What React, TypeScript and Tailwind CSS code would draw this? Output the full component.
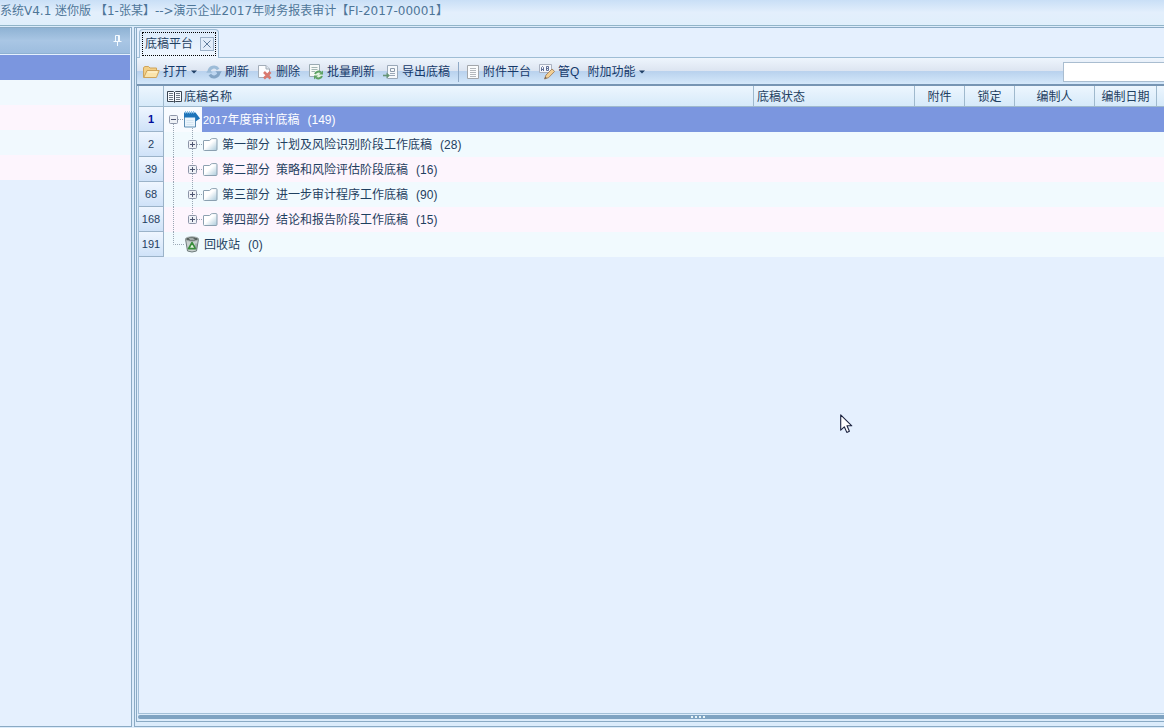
import React from 'react';

const PinIcon = () => (
  <svg width="9" height="11" viewBox="0 0 9 11" fill="none" stroke="#f4faff" aria-hidden="true">
    <path d="M2.5 0.5H6.5M2.5 0.5V6M5.5 0.5V6M6.5 0.5V6M0.5 6.5H8.5M4.5 7V11" />
  </svg>
);

const OpenFolderIcon = () => (
  <svg width="17" height="16" viewBox="0 0 17 16" aria-hidden="true">
    <path d="M0.5 13.5V3.5L2 2.5H5.5L7 4H13.5V7" fill="#f2cf86" stroke="#cfa45b" />
    <path d="M0.8 13.5L4 6.5H16.2L13.4 13.5Z" fill="#fae4ab" stroke="#cfa45b" strokeLinejoin="round" />
    <path d="M4.8 8H14" stroke="#fff6d9" />
  </svg>
);

const RefreshIcon = () => (
  <svg width="16" height="16" viewBox="0 0 16 16" fill="none" aria-hidden="true">
    <path d="M3 8A5 5 0 0 1 12.2 5.4" stroke="#9dbcd8" strokeWidth="3" />
    <path d="M13 8A5 5 0 0 1 3.8 10.6" stroke="#84a5c6" strokeWidth="3" />
    <path d="M9.4 7.2H15.8L13 11Z" fill="#84a5c6" />
    <path d="M6.6 8.8H0.2L3 5Z" fill="#9dbcd8" />
  </svg>
);

const DeleteIcon = () => (
  <svg width="16" height="16" viewBox="0 0 16 16" aria-hidden="true">
    <path d="M1.5 1.5H9L12.5 5V13.5H1.5Z" fill="#fcfdff" stroke="#a3adb9" />
    <path d="M9 1.5V5H12.5" fill="#e1e7ee" stroke="#a3adb9" />
    <path d="M7 8L13.5 14.5M13.5 8L7 14.5" stroke="#d9796f" strokeWidth="2.6" />
  </svg>
);

const BatchIcon = () => (
  <svg width="16" height="16" viewBox="0 0 16 16" fill="none" aria-hidden="true">
    <path d="M1.5 0.5H11.5V12.5H1.5Z" fill="#f7faf8" stroke="#9aaab2" />
    <path d="M3.5 3.5H9.5M3.5 5.5H9.5M3.5 7.5H7" stroke="#a4b6b4" />
    <circle cx="10.5" cy="11" r="3.6" fill="#e2f1df" />
    <path d="M7 10A3.7 3.7 0 0 1 13 8.6M14 12A3.7 3.7 0 0 1 8 13.4" stroke="#5da264" strokeWidth="2" />
    <path d="M11 10.5H15V6.5ZM10 11.5H6V15.5Z" fill="#5da264" />
  </svg>
);

const ExportIcon = () => (
  <svg width="16" height="16" viewBox="0 0 16 16" fill="none" aria-hidden="true">
    <path d="M4.5 1.5H14.5V14.5H4.5Z" fill="#f6f9fc" stroke="#9aa8b8" />
    <path d="M7.5 4.5H11.5V7.5H7.5Z" stroke="#8c9aab" />
    <path d="M7 9.5H12M7 11.5H12" stroke="#9aa8b8" />
    <path d="M0 11.5H4" stroke="#679577" strokeWidth="1.6" />
    <path d="M3.5 8.5L7 11.5L3.5 14.5Z" fill="#679577" />
  </svg>
);

const PageIcon = () => (
  <svg width="14" height="16" viewBox="0 0 14 16" fill="none" aria-hidden="true">
    <path d="M1.5 1.5H12.5V14.5H1.5Z" fill="#fbfcfd" stroke="#a2a6ab" />
    <path d="M4 4.5H10M4 6.5H10M4 8.5H10M4 10.5H10M4 12.5H10" stroke="#b4b8bd" />
  </svg>
);

const LabelPenIcon = () => (
  <svg width="16" height="16" viewBox="0 0 16 16" fill="none" aria-hidden="true">
    <path d="M0.5 0.5H12.5V8.5H0.5Z" fill="#f3f5fa" stroke="#a9b1c0" />
    <path d="M2.5 7V3.5L3.5 2.5L4.5 3.5V7M2.5 5.5H4.5M7.5 2.5V6.5H9.5V4.5H7.5M7.5 2.5H9.5V4.5" stroke="#5e6f96" />
    <path d="M5.5 15L7 11L13 5L15.6 7.4L9.6 13.6Z" fill="#f2cf94" stroke="#a88a68" />
    <path d="M5.5 15L6.3 12.8L7.9 14Z" fill="#6d6258" />
  </svg>
);

const Caret = () => (
  <svg width="8" height="4" viewBox="0 0 8 4" aria-hidden="true">
    <path d="M1 0.5H7L4 3.5Z" fill="#1f3f66" />
  </svg>
);

const BookIcon = () => (
  <svg width="15" height="13" viewBox="0 0 15 13" fill="none" aria-hidden="true">
    <path
      d="M0.5 1.5H6.5L7.5 2.5L8.5 1.5H14.5V11.5H8.5L7.5 12.5L6.5 11.5H0.5Z"
      fill="#f8fbff"
      stroke="#3b4652"
    />
    <path d="M7.5 2V12" stroke="#3b4652" />
    <path d="M2 3.5H6M2 5.5H6M2 7.5H6M2 9.5H6M9 3.5H13M9 5.5H13M9 7.5H13M9 9.5H13" stroke="#6d7883" />
  </svg>
);

const NotebookIcon = () => (
  <svg width="17" height="17" viewBox="0 0 17 17" aria-hidden="true">
    <path d="M1.5 3H12.5V16H1.5Z" fill="#eaf4fc" stroke="#5c8db3" />
    <path d="M1 1.5H12.5L17 7.5L12.5 10.5V6.5H1Z" fill="#1d74ba" />
    <path d="M2.5 0V2.5M4.5 0V2.5M6.5 0V2.5M8.5 0V2.5M10.5 0V2.5" stroke="#8cc0e6" />
    <path d="M3.5 9.5H10.5M3.5 11.5H10.5M3.5 13.5H10.5" stroke="#d5e6f2" />
  </svg>
);

const FolderIcon = () => (
  <svg width="16" height="14" viewBox="0 0 16 14" aria-hidden="true">
    <defs>
      <linearGradient id="folder" x1="0" y1="0" x2="1" y2="1">
        <stop offset="0.45" stopColor="#ffffff" />
        <stop offset="1" stopColor="#a9c9da" />
      </linearGradient>
    </defs>
    <path
      d="M1.5 11.5V3Q1.5 2.5 2 2.5H7.5L9.2 1Q9.6 0.6 10.2 0.6H14Q15 0.6 15 1.6V11.5Q15 12.5 14 12.5H2.5Q1.5 12.5 1.5 11.5Z"
      fill="url(#folder)"
      stroke="#8ba0b0"
    />
  </svg>
);

const RecycleIcon = () => (
  <svg width="16" height="17" viewBox="0 0 16 17" aria-hidden="true">
    <path d="M1.5 3L3.5 15Q8 17 12.5 15L14.5 3Z" fill="#c9d1d0" stroke="#6f7c7c" />
    <ellipse cx="8" cy="3" rx="6.5" ry="2.2" fill="#59635f" stroke="#a8b2b0" />
    <path d="M4.7 2.5H9L11 3.6H6Z" fill="#e9efee" />
    <path d="M8 6.6L11.6 12.6H4.6Z" fill="#e3f3dc" stroke="#388c3a" strokeWidth="1.8" strokeLinejoin="round" />
    <path d="M12 7.5V12.5" stroke="#79898a" />
  </svg>
);

function Toggle({ open }: { open: boolean }) {
  return (
    <button type="button" aria-label={open ? '折叠' : '展开'} className="h-[9px] w-[9px] shrink-0">
      <svg width="9" height="9" viewBox="0 0 9 9" className="block">
        <rect x="0.5" y="0.5" width="8" height="8" rx="1" fill="#eef1f6" stroke="#8d95a8" />
        <path d={open ? 'M2 4.5H7' : 'M2 4.5H7M4.5 2V7'} stroke="#4d5470" />
      </svg>
    </button>
  );
}

/* Dotted connector segment drawn in one 25px tree row */
function Guide({ d, width }: { d: string; width: 5 | 20 | 24 }) {
  return (
    <svg width={width} height="25" viewBox={`0 0 ${width} 25`} className="shrink-0 overflow-visible">
      <path d={d} stroke="#9aa7b4" strokeDasharray="1 1" fill="none" />
    </svg>
  );
}

type Tool = { label: string; icon?: React.ReactNode; menu?: boolean };

const tools: Tool[] = [
  { label: '打开', icon: <OpenFolderIcon />, menu: true },
  { label: '刷新', icon: <RefreshIcon /> },
  { label: '删除', icon: <DeleteIcon /> },
  { label: '批量刷新', icon: <BatchIcon /> },
  { label: '导出底稿', icon: <ExportIcon /> },
];

const extraTools: Tool[] = [
  { label: '附件平台', icon: <PageIcon /> },
  { label: '管Q', icon: <LabelPenIcon /> },
  { label: '附加功能', menu: true },
];

function ToolButton({ label, icon, menu }: Tool) {
  return (
    <button type="button" className="flex shrink-0 items-center gap-[3px] whitespace-nowrap">
      {icon}
      <span>{label}</span>
      {menu && <Caret />}
    </button>
  );
}

const sections = [
  { no: 2, part: '第一部分', name: '计划及风险识别阶段工作底稿', count: 28 },
  { no: 39, part: '第二部分', name: '策略和风险评估阶段底稿', count: 16 },
  { no: 68, part: '第三部分', name: '进一步审计程序工作底稿', count: 90 },
  { no: 168, part: '第四部分', name: '结论和报告阶段工作底稿', count: 15 },
];

const headCell = 'h-[21px] border-r border-b border-[#9fb9cd] p-0 pt-px font-normal';
const numberCell =
  'h-[25px] border-r border-b border-[#9bb3c9] bg-linear-to-b from-[#eff6ff] to-[#cfe2f8] p-0 text-center text-[11px]';

export default function App() {
  return (
    <div className="flex h-screen flex-col overflow-hidden bg-[#dcecfb] font-['Liberation_Sans','Noto_Sans_CJK_SC',sans-serif] text-xs leading-4 text-[#1f4060]">
      <header className="flex h-[26px] shrink-0 items-start border-b border-[#91b5c8] bg-linear-to-b from-[#c9dff6] via-[#e3effc] to-[#e0effb] pt-[3px] font-['DejaVu_Sans','Noto_Sans_CJK_SC',sans-serif] text-[#4e7698]">
        <h1 className="whitespace-pre">系统V4.1 迷你版 【1-张某】--&gt;演示企业2017年财务报表审计【FI-2017-00001】</h1>
      </header>

      <div className="flex min-h-0 flex-1 gap-[2px] pt-px pb-px">
        <aside className="w-[132px] shrink-0 border-t border-r border-b border-[#8aaac4] bg-[#e5f0fe] pr-px">
          <div className="flex h-[26px] items-center justify-end border-b border-[#8fb1d2] bg-linear-to-b from-[#8fb3d4] via-[#a9c6e4] to-[#9dbddf] pr-2">
            <button type="button" aria-label="固定">
              <PinIcon />
            </button>
          </div>
          <div className="mt-px h-[25px] bg-[#7b96df]" />
          <div className="h-[25px] bg-[#f1f9fe]" />
          <div className="h-[25px] bg-[#fdf5fd]" />
          <div className="h-[25px] bg-[#f1f9fe]" />
          <div className="h-[25px] bg-[#fdf5fd]" />
        </aside>

        <main className="min-w-0 flex-1 border-t border-b border-l border-[#8aaac4] pb-1 pl-px">
          <div className="flex h-full flex-col border-b border-l border-[#8aaac4] pb-[2px]">
            <div className="flex h-[30px] shrink-0 items-end border-b border-[#9fbdd5] bg-[#e5f0fe] pl-[2px]">
              <div
                role="tab"
                aria-selected="true"
                className="-mb-px flex h-[29px] items-start rounded-t-sm border border-b-0 border-[#9fbdd5] bg-linear-to-b from-[#dceafa] to-[#f0f7ff] px-[2px] pt-[2px]"
              >
                <div className="flex h-6 items-center gap-[7px] border border-dotted border-black pr-px pl-[2px]">
                  <span>底稿平台</span>
                  <button
                    type="button"
                    aria-label="关闭"
                    className="flex h-[14px] w-[14px] items-center justify-center border border-[#9db2c9] bg-[#e2edfa]"
                  >
                    <svg width="8" height="8" viewBox="0 0 8 8" stroke="#5f7c9b" aria-hidden="true">
                      <path d="M0.5 0.5L7.5 7.5M7.5 0.5L0.5 7.5" />
                    </svg>
                  </button>
                </div>
              </div>
            </div>

            <div
              role="toolbar"
              className="flex h-[28px] shrink-0 items-center border-b-2 border-[#7795b3] bg-[linear-gradient(to_bottom,#eef5fd_0%,#dde5f1_48%,#b9d2ee_52%,#d5e8fa_100%)] pt-[2px] pl-[6px] text-[#15396a]"
            >
              <div className="flex items-center gap-2">
                {tools.map((t) => (
                  <ToolButton key={t.label} {...t} />
                ))}
                <span className="-mr-px h-5 w-px bg-[#8fa9c6]" />
                {extraTools.map((t) => (
                  <ToolButton key={t.label} {...t} />
                ))}
              </div>
              <input
                type="text"
                aria-label="搜索"
                className="ml-auto h-[20px] w-[101px] border border-r-0 border-[#a9bdd0] bg-white px-1 outline-none"
              />
            </div>

            <div className="ml-px min-h-0 flex-1 overflow-hidden border-b border-l border-[#a3c0d8] bg-[#e5f0fe]">
              <table className="w-full table-fixed border-separate border-spacing-0">
                <colgroup>
                  <col className="w-[25px]" />
                  <col />
                  <col className="w-[161px]" />
                  <col className="w-[50px]" />
                  <col className="w-[50px]" />
                  <col className="w-[80px]" />
                  <col className="w-[62px]" />
                  <col className="w-[7px]" />
                </colgroup>
                <thead>
                  <tr className="bg-linear-to-b from-[#edf6fe] to-[#d5e9f9]">
                    <th className={headCell} />
                    <th className={headCell}>
                      <span className="flex items-center gap-[2px] pl-[3px]">
                        <BookIcon />
                        底稿名称
                      </span>
                    </th>
                    <th className={`${headCell} text-left`}>
                      <span className="pl-[3px]">底稿状态</span>
                    </th>
                    <th className={headCell}>附件</th>
                    <th className={headCell}>锁定</th>
                    <th className={headCell}>编制人</th>
                    <th className={headCell}>编制日期</th>
                    <th className="h-[21px] border-b border-[#9fb9cd] p-0" />
                  </tr>
                </thead>
                <tbody>
                  <tr>
                    <td className={`${numberCell} font-bold text-[#000c9c]`}>1</td>
                    <td className="p-0">
                      <div className="flex h-[25px] items-center bg-[#f8fbff]">
                        <Guide width={5} d="M9.5 17V25" />
                        <Toggle open />
                        <Guide width={5} d="M0 12.5H5M14.5 21V25" />
                        <NotebookIcon />
                        <div className="ml-[2px] flex h-full flex-1 items-center bg-[#7b96df] pl-px text-white">
                          <span className="text-[11px]">2017</span>
                          <span>年度审计底稿</span>
                          <span className="pl-2">(149)</span>
                        </div>
                      </div>
                    </td>
                    <td colSpan={6} className="bg-[#7b96df] p-0" />
                  </tr>
                  {sections.map((s, i) => (
                    <tr key={s.no} className={i % 2 ? 'bg-[#fdf5fd]' : 'bg-[#f1fafe]'}>
                      <td className={numberCell}>{s.no}</td>
                      <td className="p-0">
                        <div className="flex h-[25px] items-center">
                          <Guide
                            width={24}
                            d={i < sections.length - 1 ? 'M9.5 0V25M28.5 0V8M28.5 17V25' : 'M9.5 0V25M28.5 0V8'}
                          />
                          <Toggle open={false} />
                          <Guide width={5} d="M0 12.5H5" />
                          <FolderIcon />
                          <span className="pl-1">{s.part}</span>
                          <span className="pl-[6px]">{s.name}</span>
                          <span className="pl-2">({s.count})</span>
                        </div>
                      </td>
                      <td colSpan={6} className="p-0" />
                    </tr>
                  ))}
                  <tr className="bg-[#f1fafe]">
                    <td className={numberCell}>191</td>
                    <td className="p-0">
                      <div className="flex h-[25px] items-center">
                        <Guide width={20} d="M9.5 0V12.5H20" />
                        <RecycleIcon />
                        <span className="pl-1">回收站</span>
                        <span className="pl-2">(0)</span>
                      </div>
                    </td>
                    <td colSpan={6} className="p-0" />
                  </tr>
                </tbody>
              </table>
            </div>

            <div className="mt-px ml-px flex h-1 shrink-0 items-center justify-center gap-[2px] rounded-l-sm bg-[#7fa3c2] pl-[94px]">
              <span className="size-[2px] bg-[#e8f4f8]" />
              <span className="size-[2px] bg-[#e8f4f8]" />
              <span className="size-[2px] bg-[#e8f4f8]" />
              <span className="size-[2px] bg-[#e8f4f8]" />
            </div>
          </div>
        </main>
      </div>

      <svg
        width="13"
        height="20"
        viewBox="0 0 13 20"
        className="pointer-events-none absolute top-[414px] left-[840px]"
        aria-hidden="true"
      >
        <path
          d="M0.7 0.8V16.2L4.3 12.8L6.8 18.4L9.4 17.3L7 11.8H11.8Z"
          fill="#fff"
          stroke="#1c2340"
          strokeWidth="1.1"
          strokeLinejoin="round"
        />
      </svg>
    </div>
  );
}
